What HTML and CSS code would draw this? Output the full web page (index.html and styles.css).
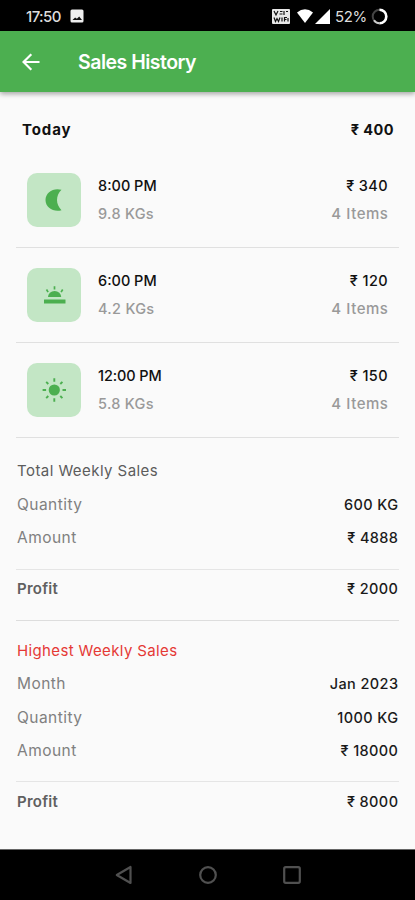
FILE: index.html
```html
<!DOCTYPE html>
<html lang="en">
<head>
<meta charset="utf-8">
<meta name="viewport" content="width=device-width, initial-scale=1">
<title>Sales History</title>
<link rel="stylesheet" href="styles.css">
</head>
<body>
<div class="status">
  <span class="clock">17:50</span>
  <svg class="pic" width="14" height="14" viewBox="0 0 14 14"><rect x=".5" y=".5" width="13" height="13" rx="1.5" fill="#eee"/><path d="M2.500 11l2.600-2.500 1.800 1.300L9.200 7.500l2.800 3.500z" fill="#111"/></svg>
  <div class="indicators">
    <svg width="18" height="15" viewBox="0 0 18 15"><rect width="18" height="15" rx="1" fill="#e8e8e8"/><path d="M2 2l2 4 2-4M7.500 5h3M8 2.500h2.500M12 2v4M14 2.500h2M2 8.500l1.500 4 1.500-3 1.500 3L8 8.500M10 8.500v4M12.500 12.500v-4h2.500M12.500 10.500h2M16 9v3.500" fill="none" stroke="#111" stroke-width="1.200"/></svg>
    <svg class="wifi" width="16" height="14" viewBox="0 0 16 14"><path d="M0 3.500Q8-3 16 3.500L8 14z" fill="#fff"/></svg>
    <svg class="cell" width="15" height="15" viewBox="0 0 15 15"><path d="M15 0v15H0z" fill="#fff"/></svg>
    <span class="percent">52%</span>
    <svg class="ring" width="17" height="17" viewBox="0 0 17 17"><circle cx="8.500" cy="8.500" r="6.800" fill="none" stroke="#444" stroke-width="2"/><path d="M8.500 1.700a6.800 6.800 0 0 1 0 13.600" fill="none" stroke="#fff" stroke-width="2.600"/><path d="M8.500 15.300a6.800 6.800 0 0 1-5.500-3" fill="none" stroke="#ccc" stroke-width="2"/></svg>
  </div>
</div>
<header class="appbar">
  <svg class="back" width="18" height="18" viewBox="0 0 18 18"><path d="M17.500 9H1.500M9.300 1.200L1.500 9l7.800 7.800" fill="none" stroke="#fff" stroke-width="2.200"/></svg>
  <h1>Sales History</h1>
</header>
<main>
  <div class="today"><span class="t-today">Today</span><span class="t-total">₹ 400</span></div>
  <div class="sale">
    <div class="tile"><svg width="54" height="54" viewBox="0 0 54 54"><path d="M34.500 16.800C27 14.300 18.500 19 18.500 27S27 39.500 34.500 37.200C28.500 31.500 28.500 22.500 34.500 16.800z" fill="#4caf50"/></svg></div>
    <div class="info"><b>8:00 PM</b><span>9.8 KGs</span></div>
    <div class="info end"><b>₹ 340</b><span>4 Items</span></div>
  </div>
  <div class="sale">
    <div class="tile"><svg width="54" height="54" viewBox="0 0 54 54" fill="#4caf50"><rect x="17" y="31.500" width="21.500" height="4" rx=".3"/><path d="M21 29a6.600 6 0 0 1 13.200 0z"/><path d="M27.500 18.300v3.200M19.500 21.500l1.600 2.600M35.700 21.500l-1.600 2.600" stroke="#4caf50" stroke-width="1.700"/></svg></div>
    <div class="info"><b>6:00 PM</b><span>4.2 KGs</span></div>
    <div class="info end"><b>₹ 120</b><span>4 Items</span></div>
  </div>
  <div class="sale">
    <div class="tile"><svg width="54" height="54" viewBox="0 0 54 54"><circle cx="27.300" cy="27" r="5.600" fill="#4caf50"/><path d="M27.300 15.300v3.500M27.300 35.200v3.500M15.600 27h3.500M35.500 27H39M19.200 18.900l2.100 2.100M33.300 33l2.100 2.100M19.200 35.100l2.100-2.100M33.300 21l2.100-2.100" stroke="#4caf50" stroke-width="1.900"/></svg></div>
    <div class="info"><b class="noon">12:00 PM</b><span>5.8 KGs</span></div>
    <div class="info end"><b>₹ 150</b><span>4 Items</span></div>
  </div>
  <section class="summary">
    <h2>Total Weekly Sales</h2>
    <div class="row"><span>Quantity</span><b>600 KG</b></div>
    <div class="row"><span>Amount</span><b>₹ 4888</b></div>
    <div class="profit"><strong>Profit</strong><b>₹ 2000</b></div>
  </section>
  <section class="summary highest">
    <h2>Highest Weekly Sales</h2>
    <div class="row"><span>Month</span><b>Jan 2023</b></div>
    <div class="row"><span>Quantity</span><b>1000 KG</b></div>
    <div class="row"><span>Amount</span><b>₹ 18000</b></div>
    <div class="profit"><strong>Profit</strong><b>₹ 8000</b></div>
  </section>
</main>
<nav class="navbar">
  <svg width="18" height="20" viewBox="0 0 18 20"><path d="M15.500 2v16L1.800 10z" fill="none" stroke="#505050" stroke-width="2.200" stroke-linejoin="round"/></svg>
  <svg width="18" height="18" viewBox="0 0 18 18"><circle cx="9" cy="9" r="7.800" fill="none" stroke="#505050" stroke-width="2.200"/></svg>
  <svg width="18" height="18" viewBox="0 0 18 18"><rect x="1.200" y="1.200" width="15.600" height="15.600" rx="1.500" fill="none" stroke="#505050" stroke-width="2.200"/></svg>
</nav>
</body>
</html>
```
FILE: styles.css
```css
* { box-sizing: border-box; }
body {
  margin: 0;
  height: 900px;
  overflow: hidden;
  display: flex;
  flex-direction: column;
  background: #fafafa;
  color: #1a1a1a;
  font: 500 14.5px/28px Inter, "Noto Sans", sans-serif;
}
h1, h2 { margin: 0; }
b { font-weight: 500; }
svg { display: block; flex: none; }

.status {
  height: 31px;
  flex: none;
  display: flex;
  align-items: center;
  padding: 1px 27px 0 26px;
  background: #000;
  color: #ddd;
}
.clock { font: 500 15px Inter, sans-serif; letter-spacing: -.6px; width: 35px; }
.pic { margin-left: 9px; }
.indicators { display: flex; align-items: center; margin-left: auto; }
.wifi { margin-left: 7px; }
.cell { margin-left: 2px; }
.percent { margin-left: 5px; width: 32px; font: 400 15px Inter, sans-serif; letter-spacing: -.4px; }
.ring { margin-left: 4px; }

.appbar {
  height: 61px;
  flex: none;
  display: flex;
  align-items: center;
  padding-left: 22px;
  background: #4caf50;
  box-shadow: 0 2px 5px rgba(0, 0, 0, .35);
  color: #fff;
}
.appbar h1 { margin-left: 38px; font: 600 19.5px Inter, sans-serif; letter-spacing: -.5px; }

main { flex: 1; padding: 0 16px; }
.today {
  height: 61px;
  display: flex;
  align-items: center;
  justify-content: space-between;
  padding: 14px 5px 0 6px;
  font-weight: 700;
  color: #111;
}
.t-today { font-size: 15px; letter-spacing: .9px; }
.t-total { letter-spacing: .45px; }
.sale {
  display: flex;
  height: 95px;
  padding: 20px 11px 0;
  border-bottom: 1px solid #e0e0e0;
}
.tile {
  width: 54px;
  height: 54px;
  border-radius: 10px;
  background: #c3e6c5;
}
.info { display: flex; flex-direction: column; margin: -1.5px 0 0 17px; }
.info b { color: #111; }
.info .noon { letter-spacing: -.1px; }
.info span { color: #999; letter-spacing: .3px; }
.end { margin-left: auto; text-align: right; }
.end b { letter-spacing: .4px; }
.end span { font-size: 15px; letter-spacing: .55px; margin-right: -.5px; }

.summary { padding-top: 16px; line-height: 33.5px; }
.summary h2 { padding-left: 1px; font-size: 15px; font-weight: 400; letter-spacing: .44px; color: #5c5c5c; }
.row, .profit { display: flex; justify-content: space-between; padding: 0 1px; }
.row span { color: #808080; font-size: 15.5px; font-weight: 400; letter-spacing: .45px; }
.row b, .profit b { letter-spacing: .4px; margin-right: -.4px; }
.profit {
  height: 52px;
  margin-top: 14px;
  padding-top: 2px;
  border-top: 1px solid #e5e5e5;
  border-bottom: 1px solid #ddd;
}
.profit strong { font-size: 15px; font-weight: 600; letter-spacing: .25px; color: #606060; }
.highest { padding-top: 13px; line-height: 33.5px; }
.highest h2 { color: #e53935; letter-spacing: .37px; }
.highest .profit { margin-top: 13px; padding-top: 3px; border-bottom: 0; }

.navbar {
  height: 51px;
  flex: none;
  display: flex;
  align-items: center;
  justify-content: center;
  gap: 66px;
  background: #000;
  border-top: 1px solid #666;
}
```
